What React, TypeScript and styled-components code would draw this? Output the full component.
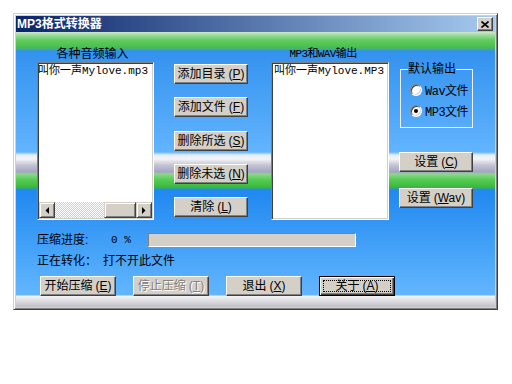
import React from "react";
import styled, { createGlobalStyle, css } from "styled-components";

const GlobalStyle = createGlobalStyle`
  html, body {
    margin: 0;
    padding: 0;
    background: #fff;
  }
  body {
    font-family: "Liberation Sans", "Noto Sans CJK SC", sans-serif;
    font-size: 12px;
  }
`;

const Page = styled.div`
  padding: 13px 0 0 13px;
`;

const Window = styled.div`
  width: 485px;
  height: 297px;
  box-sizing: border-box;
  background: #d4d0c8;
  border: 1px solid;
  border-color: #d4d0c8 #404040 #404040 #d4d0c8;
  box-shadow: inset 1px 1px #fff, inset -1px -1px #808080;
  padding: 2px;
  display: flex;
  flex-direction: column;
`;

const TitleBar = styled.div`
  height: 16px;
  flex: none;
  display: flex;
  align-items: center;
  justify-content: space-between;
  padding: 0 2px 0 1px;
  background: linear-gradient(to right, #0a246a, #a6caf0);
  color: #fff;
  font: bold 12px "Liberation Sans", "Noto Sans CJK SC", sans-serif;
  line-height: 16px;
`;

const CloseBox = styled.div`
  width: 16px;
  height: 14px;
  box-sizing: border-box;
  background: #d4d0c8;
  border: 1px solid;
  border-color: #fff #404040 #404040 #fff;
  box-shadow: inset -1px -1px #808080;
  display: flex;
  align-items: center;
  justify-content: center;
`;

const Body = styled.div`
  flex: 1;
  display: flex;
  flex-direction: column;
  padding: 12px 0 0 21px;
  background: linear-gradient(
    to bottom,
    #cfe6cf 0px,
    #9edc9e 3px,
    #62cc62 8px,
    #4cc24c 14px,
    #45ae78 17px,
    #3392ef 19px,
    #62b4fe 120px,
    #e4eef8 123px,
    #f4f4f6 127px,
    #c4c4d6 133px,
    #a6a4c4 140px,
    #8cd88c 142px,
    #52cc52 148px,
    #3cb83c 155px,
    #2088f0 158px,
    #62b6ff 263px,
    #f4f4f6 264px,
    #c0c0c8 275px
  );
`;

const HeaderRow = styled.div`
  display: flex;
  height: 14px;
  margin-bottom: 4px;
`;

const Caption = styled.div<{ $w: number; $ml?: number; $pr?: number; $small?: boolean }>`
  width: ${(p) => p.$w}px;
  margin-left: ${(p) => p.$ml ?? 0}px;
  padding-right: ${(p) => p.$pr ?? 0}px;
  box-sizing: border-box;
  text-align: center;
  line-height: 14px;
  white-space: nowrap;
  color: #000;
  font: ${(p) => (p.$small ? '11px "Liberation Mono", "Noto Sans CJK SC", monospace' : '12px "Liberation Sans", "Noto Sans CJK SC", sans-serif')};
  ${(p) => p.$small && css`letter-spacing: -0.6px;`}
`;

const MainRow = styled.div`
  display: flex;
  align-items: flex-start;
  height: 158px;
`;

const ListBox = styled.div<{ $w: number; $mr: number }>`
  width: ${(p) => p.$w}px;
  height: 158px;
  margin-right: ${(p) => p.$mr}px;
  box-sizing: border-box;
  background: #fff;
  border: 1px solid;
  border-color: #808080 #fff #fff #808080;
  box-shadow: inset 1px 1px #404040, inset -1px -1px #d4d0c8;
  padding: 1px;
  display: flex;
  flex-direction: column;
  overflow: hidden;
`;

const ListItem = styled.div<{ $shift?: number }>`
  margin-left: ${(p) => -(p.$shift ?? 0)}px;
  padding-left: 1px;
  font: 11px "Liberation Mono", "Noto Sans CJK SC", monospace;
  line-height: 14px;
  white-space: nowrap;
  color: #000;
`;

const HScroll = styled.div`
  margin-top: auto;
  height: 16px;
  display: flex;
  flex: none;
`;

const ScrollArrow = styled.div`
  width: 16px;
  height: 16px;
  box-sizing: border-box;
  background: #d4d0c8;
  border: 1px solid;
  border-color: #d4d0c8 #404040 #404040 #d4d0c8;
  box-shadow: inset 1px 1px #fff, inset -1px -1px #808080;
  display: flex;
  align-items: center;
  justify-content: center;
`;

const ScrollTrack = styled.div`
  flex: 1;
  display: flex;
  justify-content: flex-end;
  background: repeating-conic-gradient(#fff 0 25%, #d4d0c8 0 50%) 0 0 / 2px 2px;
`;

const ScrollThumb = styled.div`
  width: 32px;
  height: 16px;
  box-sizing: border-box;
  background: #d4d0c8;
  border: 1px solid;
  border-color: #d4d0c8 #404040 #404040 #d4d0c8;
  box-shadow: inset 1px 1px #fff, inset -1px -1px #808080;
`;

const ButtonColumn = styled.div`
  width: 74px;
  height: 158px;
  margin-right: 23px;
  box-sizing: border-box;
  padding: 2px 0 3px;
  display: flex;
  flex-direction: column;
  justify-content: space-between;
`;

const Button = styled.button<{ $w?: number; $default?: boolean }>`
  width: ${(p) => p.$w ?? 74}px;
  height: 20px;
  flex: none;
  box-sizing: border-box;
  padding: 0;
  margin: 0;
  background: #d4d0c8;
  border: 1px solid;
  border-color: #fff #404040 #404040 #fff;
  box-shadow: inset -1px -1px #808080;
  font: 12px "Liberation Sans", "Noto Sans CJK SC", sans-serif;
  line-height: 16px;
  color: #000;
  display: flex;
  align-items: center;
  justify-content: center;
  white-space: nowrap;
  u {
    text-decoration: underline;
    text-underline-offset: 1px;
  }
  ${(p) =>
    p.$default &&
    css`
      border: 1px solid #000;
      box-shadow: inset 1px 1px #fff, inset -1px -1px #404040, inset -2px -2px #808080;
      outline: 1px dotted #000;
      outline-offset: -5px;
    `}
  &:disabled {
    color: #808080;
    text-shadow: 1px 1px #fff;
  }
`;

const Mnemonic = styled.span`
  margin-left: 3px;
`;

const RightPanel = styled.div`
  width: 74px;
  display: flex;
  flex-direction: column;
`;

const GroupBox = styled.fieldset`
  margin: 0 0 24px 1px;
  width: 73px;
  box-sizing: border-box;
  padding: 0 0 9px 7px;
  border: 1px solid #eef2f6;
  min-width: 0;
`;

const Legend = styled.legend`
  padding: 0;
  font: 12px "Liberation Sans", "Noto Sans CJK SC", sans-serif;
  line-height: 14px;
  color: #000;
`;

const RadioRow = styled.div<{ $top: number }>`
  display: flex;
  align-items: center;
  height: 14px;
  margin-top: ${(p) => p.$top}px;
  padding-left: 2px;
  font: 12px "Liberation Mono", "Noto Sans CJK SC", monospace;
  letter-spacing: -0.5px;
  color: #000;
  white-space: nowrap;
`;

const RadioDot = styled.span<{ $on?: boolean }>`
  width: 12px;
  height: 12px;
  margin-right: 3px;
  flex: none;
  border-radius: 50%;
  box-sizing: border-box;
  background: #fff;
  border: 1px solid;
  border-color: #808080 #fff #fff #808080;
  box-shadow: inset 1px 1px #404040, inset -1px -1px #d4d0c8;
  display: flex;
  align-items: center;
  justify-content: center;
  &::after {
    content: "";
    width: 4px;
    height: 4px;
    border-radius: 50%;
    background: ${(p) => (p.$on ? "#000" : "transparent")};
  }
`;

const SideStack = styled.div`
  display: flex;
  flex-direction: column;
  gap: 16px;
`;

const InfoRow = styled.div<{ $top: number }>`
  display: flex;
  align-items: center;
  height: 14px;
  margin-top: ${(p) => p.$top}px;
  color: #000;
  line-height: 14px;
  white-space: nowrap;
`;

const InfoLabel = styled.span<{ $w: number }>`
  width: ${(p) => p.$w}px;
  flex: none;
`;

const Percent = styled.span`
  width: 37px;
  flex: none;
  font: 11px "Liberation Mono", monospace;
`;

const ProgressBar = styled.div`
  width: 208px;
  height: 14px;
  box-sizing: border-box;
  background: #d4d0c8;
  border: 1px solid;
  border-color: #808080 #fff #fff #808080;
`;

const ButtonRow = styled.div`
  display: flex;
  gap: 17px;
  margin-top: 8px;
  padding-left: 3px;
`;

function Arrow({ dir }: { dir: "left" | "right" }) {
  return (
    <svg width="4" height="7" viewBox="0 0 4 7">
      {dir === "left" ? <polygon points="4,0 4,7 0.5,3.5" fill="#000" /> : <polygon points="0,0 0,7 3.5,3.5" fill="#000" />}
    </svg>
  );
}

function Label({ text, k }: { text: string; k: string }) {
  return (
    <>
      {text}
      <Mnemonic>
        (<u>{k}</u>)
      </Mnemonic>
    </>
  );
}

export default function App() {
  return (
    <Page>
      <GlobalStyle />
      <Window>
        <TitleBar>
          <span>MP3格式转换器</span>
          <CloseBox>
            <svg width="8" height="7" viewBox="0 0 8 7">
              <path d="M0.5 0.5 L7.5 6.5 M7.5 0.5 L0.5 6.5" stroke="#000" strokeWidth="1.6" />
            </svg>
          </CloseBox>
        </TitleBar>
        <Body>
          <HeaderRow>
            <Caption $w={117} $pr={6}>
              各种音频输入
            </Caption>
            <Caption $w={118} $ml={117} $pr={14} $small>
              MP3和WAV输出
            </Caption>
          </HeaderRow>
          <MainRow>
            <ListBox $w={117} $mr={20}>
              <ListItem $shift={2}>叫你一声Mylove.mp3</ListItem>
              <HScroll>
                <ScrollArrow>
                  <Arrow dir="left" />
                </ScrollArrow>
                <ScrollTrack>
                  <ScrollThumb />
                </ScrollTrack>
                <ScrollArrow>
                  <Arrow dir="right" />
                </ScrollArrow>
              </HScroll>
            </ListBox>
            <ButtonColumn>
              <Button>
                <Label text="添加目录" k="P" />
              </Button>
              <Button>
                <Label text="添加文件" k="F" />
              </Button>
              <Button>
                <Label text="删除所选" k="S" />
              </Button>
              <Button>
                <Label text="删除未选" k="N" />
              </Button>
              <Button>
                <Label text="清除" k="L" />
              </Button>
            </ButtonColumn>
            <ListBox $w={118} $mr={10}>
              <ListItem>叫你一声Mylove.MP3</ListItem>
            </ListBox>
            <RightPanel>
              <GroupBox>
                <Legend>默认输出</Legend>
                <RadioRow $top={7}>
                  <RadioDot />
                  Wav文件
                </RadioRow>
                <RadioRow $top={7}>
                  <RadioDot $on />
                  MP3文件
                </RadioRow>
              </GroupBox>
              <SideStack>
                <Button>
                  <Label text="设置" k="C" />
                </Button>
                <Button>
                  设置
                  <Mnemonic>
                    (<u>W</u>av)
                  </Mnemonic>
                </Button>
              </SideStack>
            </RightPanel>
          </MainRow>
          <InfoRow $top={13}>
            <InfoLabel $w={74}>压缩进度:</InfoLabel>
            <Percent>0 %</Percent>
            <ProgressBar />
          </InfoRow>
          <InfoRow $top={7}>
            <InfoLabel $w={66}>正在转化：</InfoLabel>
            <span>打不开此文件</span>
          </InfoRow>
          <ButtonRow>
            <Button $w={76}>
              <Label text="开始压缩" k="E" />
            </Button>
            <Button $w={76} disabled>
              <Label text="停止压缩" k="T" />
            </Button>
            <Button $w={76}>
              <Label text="退出" k="X" />
            </Button>
            <Button $w={76} $default>
              <Label text="关于" k="A" />
            </Button>
          </ButtonRow>
        </Body>
      </Window>
    </Page>
  );
}
